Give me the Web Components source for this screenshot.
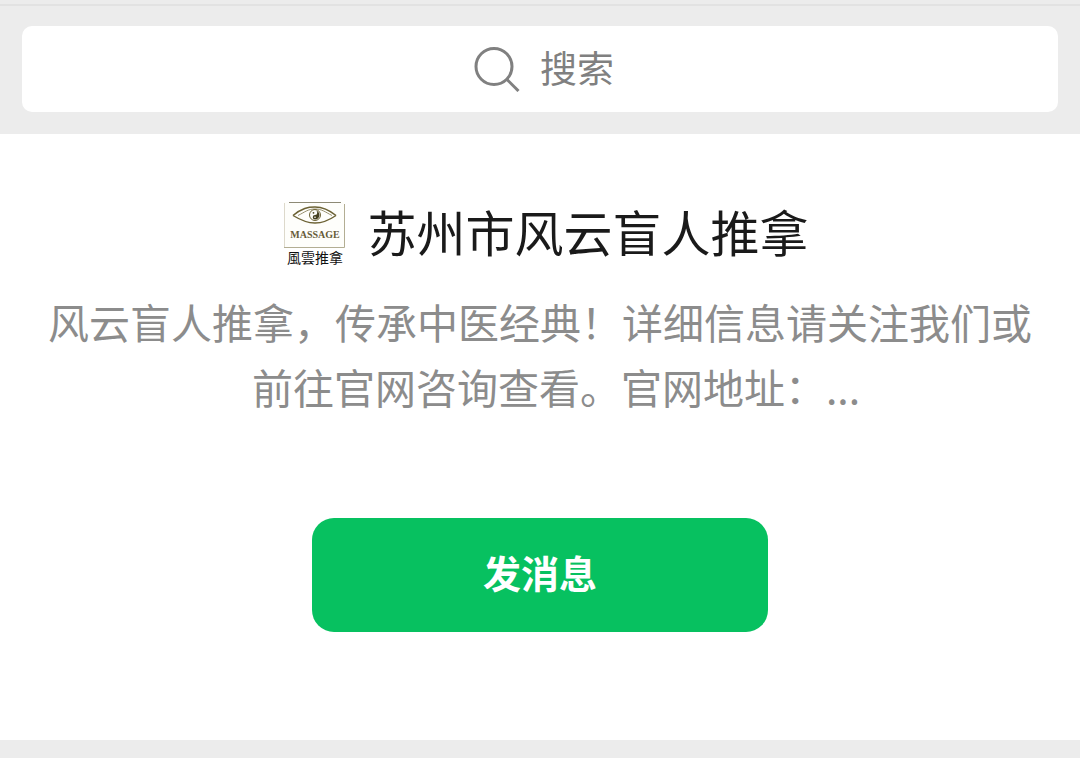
<!DOCTYPE html>
<html lang="zh-CN">
<head>
<meta charset="utf-8">
<meta name="viewport" content="width=device-width, initial-scale=1">
<title>苏州市风云盲人推拿</title>
<style>
  body { margin: 0; background: #ececec; font-family: "Noto Sans CJK SC", "Noto Sans", sans-serif; }
</style>
</head>
<body>
<account-page></account-page>

<template id="search-bar">
  <style>
    :host { display: block; padding: 20px 22px 22px; background: #ececec; }
    label { display: flex; align-items: center; justify-content: center; gap: 20px; height: 86px; padding-left: 10px; box-sizing: border-box; border-radius: 10px; background: #fff; cursor: text; }
    svg { width: 46px; height: 46px; flex: none; }
    input { width: 76px; height: 56px; padding: 0 0 4px; border: 0; outline: 0; background: none; font: inherit; font-size: 37px; line-height: 56px; color: #1a1a1a; }
    input::placeholder { color: #808080; opacity: 1; }
  </style>
  <label>
    <svg viewBox="0 0 46 46" fill="none" stroke="#808080" stroke-width="3" aria-hidden="true">
      <circle cx="20" cy="20.500" r="18"/><path d="M32.500 33 44.500 45"/>
    </svg>
    <input type="text" placeholder="搜索" aria-label="搜索">
  </label>
</template>

<template id="account-logo">
  <style>
    :host { display: block; flex: none; }
    svg { display: block; width: 62px; height: 66px; }
    .latin { font: bold 10px "Liberation Serif", serif; fill: #665c38; }
    .han { font: 400 14px "Noto Sans CJK TC", sans-serif; fill: #111; }
  </style>
  <svg viewBox="0 0 62 66" role="img" aria-label="風雲推拿">
    <rect x="1" y="1" width="60" height="45" fill="#fefefb"/>
    <path d="M1.500 2V46" stroke="#ddd9cb"/>
    <path d="M1 46.500H61.500V3" fill="none" stroke="#b3ae93"/>
    <path d="M6 1.500H58" stroke="#8d8a75"/>
    <g fill="none" stroke="#6c6234">
      <path d="M10 14.500C19 7 25 6 32 6S45 8 53 14.500" stroke-width="1.600"/>
      <path d="M10 14.500C19 20 25 22 32 22S45 20 53 14.500" stroke-width="1.400"/>
      <path d="M15 14.500C22 11 25 8 32 8S42 11 49 14.500" stroke-width=".7"/>
      <circle cx="32" cy="14" r="5.500" stroke-width="1"/>
    </g>
    <path d="M32 9.500a4.500 4.500 0 0 1 0 9 2.250 2.250 0 0 1 0-4.500 2.250 2.250 0 0 0 0-4.500Z" fill="#454021"/>
    <circle cx="32" cy="16.300" r=".8" fill="#fff"/>
    <circle cx="30.500" cy="11.800" r=".9" fill="#454021"/>
    <text class="latin" x="32" y="37" text-anchor="middle">MASSAGE</text>
    <text class="han" x="32" y="62" text-anchor="middle">風雲推拿</text>
  </svg>
</template>

<template id="account-card">
  <style>
    :host { display: flex; flex-direction: column; align-items: center; padding: 64px 44px 108px; background: #fff; }
    header { display: flex; align-items: center; justify-content: center; gap: 22px; padding-left: 12px; }
    h1 { margin: 0; padding-bottom: 6px; font-size: 49px; line-height: 66px; font-weight: 400; color: #1a1a1a; }
    p { margin: 19px 0 99px; font-size: 41px; line-height: 65px; font-weight: 400; color: #8c8c8c; text-align: center; }
  </style>
  <header><account-logo></account-logo><h1><slot name="name"></slot></h1></header>
  <p><slot></slot></p>
  <slot name="action"></slot>
</template>

<template id="action-button">
  <style>
    :host { display: block; width: 456px; max-width: 100%; }
    button { display: block; width: 100%; height: 114px; padding: 0 0 6px; border: 0; border-radius: 22px; background: #07c160; color: #fff; font: inherit; font-size: 38px; line-height: 56px; font-weight: 700; cursor: pointer; }
  </style>
  <button type="button"><slot></slot></button>
</template>

<template id="account-page">
  <style>
    :host { display: block; padding: 4px 0 18px; }
    hr { height: 2px; margin: 0; border: 0; background: #e2e2e2; }
    .tail { padding-left: 32px; }
  </style>
  <hr>
  <search-bar></search-bar>
  <account-card>
    <span slot="name">苏州市风云盲人推拿</span>
    风云盲人推拿，传承中医经典！详细信息请关注我们或<span class="tail">前往官网咨询查看。官网地址：...</span>
    <action-button slot="action">发消息</action-button>
  </account-card>
</template>

<script>
  for (const name of ["search-bar", "account-logo", "account-card", "action-button", "account-page"]) {
    customElements.define(name, class extends HTMLElement {
      constructor() {
        super();
        this.attachShadow({ mode: "open" })
          .append(document.getElementById(name).content.cloneNode(true));
      }
    });
  }
</script>
</body>
</html>
